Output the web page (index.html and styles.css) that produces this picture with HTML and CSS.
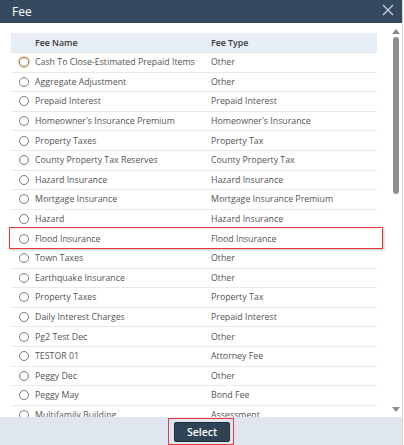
FILE: index.html
```html
<!DOCTYPE html>
<html>
<head>
<meta charset="utf-8">
<link rel="stylesheet" href="styles.css">
</head>
<body>
<div class="dialog">
  <div class="titlebar">
    <span class="title">Fee</span>
    <svg class="close" width="12" height="12" viewBox="0 0 12 12"><path d="M1 1L11 11M11 1L1 11" stroke="#c9d2dc" stroke-width="1.3" fill="none"/></svg>
  </div>
  <div class="body">
    <div class="list-area">
      <div class="table">
        <div class="row head"><span class="c0"></span><span class="c1">Fee Name</span><span class="c2">Fee Type</span></div>
        <div class="row"><span class="c0"><i class="radio focus"></i></span><span class="c1">Cash To Close-Estimated Prepaid Items</span><span class="c2">Other</span></div>
        <div class="row"><span class="c0"><i class="radio"></i></span><span class="c1">Aggregate Adjustment</span><span class="c2">Other</span></div>
        <div class="row"><span class="c0"><i class="radio"></i></span><span class="c1">Prepaid Interest</span><span class="c2">Prepaid Interest</span></div>
        <div class="row"><span class="c0"><i class="radio"></i></span><span class="c1">Homeowner's Insurance Premium</span><span class="c2">Homeowner's Insurance</span></div>
        <div class="row"><span class="c0"><i class="radio"></i></span><span class="c1">Property Taxes</span><span class="c2">Property Tax</span></div>
        <div class="row"><span class="c0"><i class="radio"></i></span><span class="c1">County Property Tax Reserves</span><span class="c2">County Property Tax</span></div>
        <div class="row"><span class="c0"><i class="radio"></i></span><span class="c1">Hazard Insurance</span><span class="c2">Hazard Insurance</span></div>
        <div class="row"><span class="c0"><i class="radio"></i></span><span class="c1">Mortgage Insurance</span><span class="c2">Mortgage Insurance Premium</span></div>
        <div class="row"><span class="c0"><i class="radio"></i></span><span class="c1">Hazard</span><span class="c2">Hazard Insurance</span></div>
        <div class="row marked"><span class="c0"><i class="radio"></i></span><span class="c1">Flood Insurance</span><span class="c2">Flood Insurance</span></div>
        <div class="row"><span class="c0"><i class="radio"></i></span><span class="c1">Town Taxes</span><span class="c2">Other</span></div>
        <div class="row"><span class="c0"><i class="radio"></i></span><span class="c1">Earthquake Insurance</span><span class="c2">Other</span></div>
        <div class="row"><span class="c0"><i class="radio"></i></span><span class="c1">Property Taxes</span><span class="c2">Property Tax</span></div>
        <div class="row"><span class="c0"><i class="radio"></i></span><span class="c1">Daily Interest Charges</span><span class="c2">Prepaid Interest</span></div>
        <div class="row"><span class="c0"><i class="radio"></i></span><span class="c1">Pg2 Test Dec</span><span class="c2">Other</span></div>
        <div class="row"><span class="c0"><i class="radio"></i></span><span class="c1">TESTOR 01</span><span class="c2">Attorney Fee</span></div>
        <div class="row"><span class="c0"><i class="radio"></i></span><span class="c1">Peggy Dec</span><span class="c2">Other</span></div>
        <div class="row"><span class="c0"><i class="radio"></i></span><span class="c1">Peggy May</span><span class="c2">Bond Fee</span></div>
        <div class="row"><span class="c0"><i class="radio"></i></span><span class="c1">Multifamily Building</span><span class="c2">Assessment</span></div>
      </div>
    </div>
    <div class="scrollbar">
      <svg class="arrow" width="8" height="5" viewBox="0 0 8 5"><path d="M0 5L4 0L8 5Z" fill="#8a8a8a"/></svg>
      <div class="track"><div class="thumb"></div></div>
      <svg class="arrow" width="8" height="5" viewBox="0 0 8 5"><path d="M0 0L4 5L8 0Z" fill="#8a8a8a"/></svg>
    </div>
  </div>
  <div class="footer">
    <div class="btn-wrap"><button class="btn">Select</button></div>
  </div>
</div>
</body>
</html>
```
FILE: styles.css
```css
* { box-sizing: border-box; }
html, body { margin: 0; padding: 0; background: #fff; }
body { font-family: "Open Sans", "Noto Sans", sans-serif; }
.dialog {
  width: 403px;
  height: 445px;
  display: flex;
  flex-direction: column;
  border-right: 1px solid #d6d6d6;
  overflow: hidden;
}
.titlebar {
  height: 23px;
  background: #34495e;
  display: flex;
  align-items: center;
  justify-content: space-between;
  padding: 0 8px 0 12px;
  flex: none;
}
.title { color: #fff; font-size: 12px; line-height: 1; }
.close { display: block; margin-top: -3px; }
.body {
  flex: 1;
  display: flex;
  min-height: 0;
}
.list-area {
  flex: 1;
  padding: 10px 0 0 11px;
  overflow: hidden;
}
.table { width: 366px; position: relative; }
.row {
  display: flex;
  align-items: center;
  height: 19.6px;
  border-bottom: 1px solid #e8ebee;
  font-size: 8.8px;
  color: #555;
  white-space: nowrap;
  position: relative;
}
.row.head {
  height: 20px;
  background: #e8eef5;
  border-bottom: 1px solid #dfe5ec;
  font-weight: 600;
  color: #3a3a3a;
}
.c0 { width: 24px; display: flex; align-items: center; justify-content: center; padding-left: 1px; }
.c1 { width: 176px; }
.c2 { flex: 1; }
.radio {
  display: block;
  width: 10px;
  height: 10px;
  border: 1px solid #7d7d7d;
  border-radius: 50%;
  background: #fff;
}
.radio.focus { box-shadow: 0 0 0 1.5px #f8d9a8; }
.row.marked::after {
  content: "";
  position: absolute;
  left: -2px;
  right: -6px;
  top: -2px;
  bottom: -1px;
  border: 1.5px solid #e8383d;
  box-shadow: 1px 1px 2px rgba(0,0,0,0.25);
  pointer-events: none;
}
.scrollbar {
  width: 11px;
  margin-right: 1px;
  display: flex;
  flex-direction: column;
  align-items: center;
  padding: 6px 0 5px;
  background: #fff;
}
.arrow { display: block; flex: none; }
.track { flex: 1; width: 100%; padding-top: 3px; display: flex; justify-content: center; }
.thumb { width: 6px; height: 157px; background: #8e8e8e; border-radius: 3px; }
.footer {
  height: 28px;
  background: #dfe6ee;
  flex: none;
  display: flex;
  justify-content: center;
  align-items: center;
}
.btn-wrap {
  border: 1.5px solid #e8383d;
  padding: 3px 3px 2px 5px;
}
.btn {
  display: block;
  width: 56px;
  height: 20px;
  background: #2f4357;
  color: #fff;
  border: 1px solid #1f2f3f;
  border-radius: 2px;
  font-family: "Open Sans", sans-serif;
  font-size: 10.5px;
  font-weight: 600;
  padding: 0;
}
```
